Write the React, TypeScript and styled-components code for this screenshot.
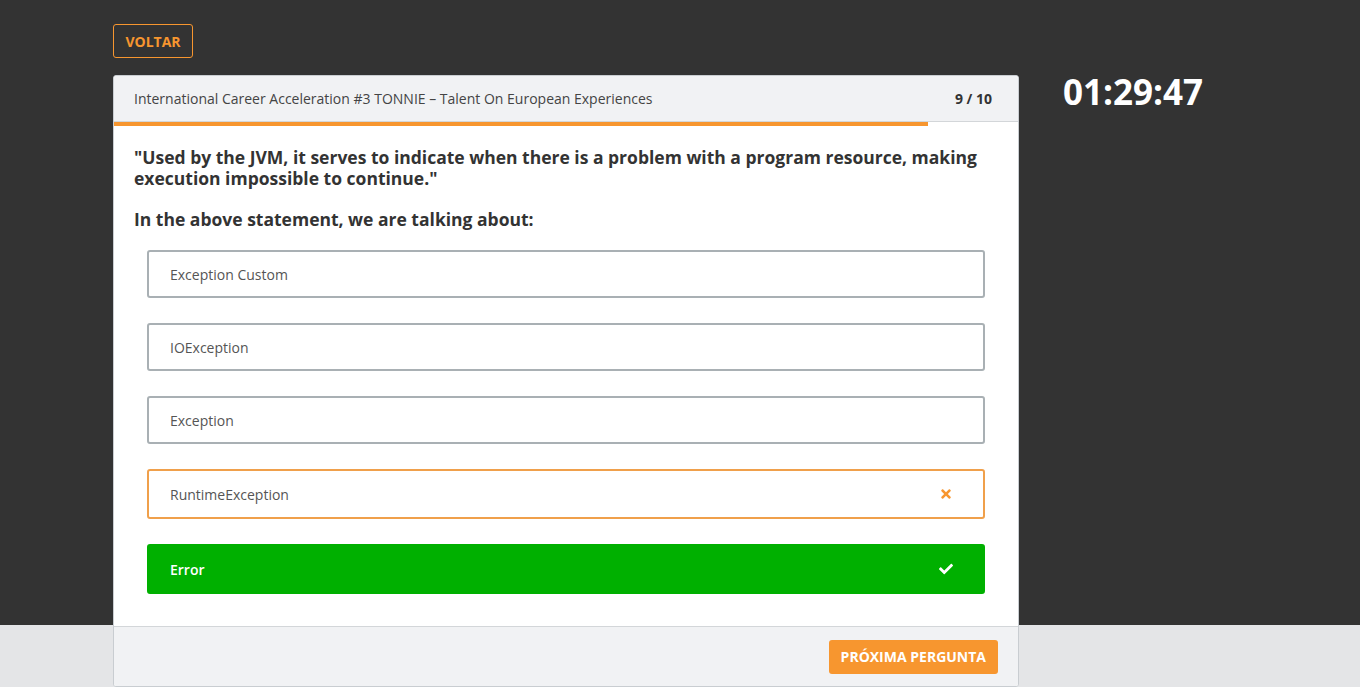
import React from "react";
import styled, { createGlobalStyle } from "styled-components";
import { FaTimes, FaCheck } from "react-icons/fa";

const Global = createGlobalStyle`
  html, body { margin: 0; padding: 0; }
  body {
    font-family: "Open Sans", "Noto Sans", sans-serif;
    background: #e4e5e7;
    -webkit-font-smoothing: antialiased;
  }
`;

const Page = styled.div`
  min-height: 687px;
  background: linear-gradient(#333333 0, #333333 625px, #e4e5e7 625px);
  padding: 24px 0 0 113px;
  box-sizing: border-box;
`;

const BackButton = styled.button`
  display: block;
  width: 80px;
  height: 34px;
  border: 1px solid #f7962f;
  border-radius: 3px;
  background: transparent;
  color: #f7962f;
  font-family: inherit;
  font-size: 14px;
  font-weight: 700;
  padding: 0;
  cursor: pointer;
`;

const Row = styled.div`
  display: flex;
  align-items: flex-start;
  margin-top: 17px;
`;

const Card = styled.div`
  width: 906px;
  box-sizing: border-box;
  background: #fff;
  border: 1px solid #c9cdd1;
  border-radius: 3px;
  overflow: hidden;
`;

const Header = styled.div`
  height: 45px;
  display: flex;
  align-items: center;
  justify-content: space-between;
  padding: 0 26px 0 20px;
  background: #f1f2f4;
  border-bottom: 1px solid #d3d6d9;
`;

const Title = styled.span`
  font-size: 14px;
  color: #444;
`;

const Counter = styled.span`
  font-size: 14px;
  font-weight: 700;
  color: #333;
`;

const Progress = styled.div`
  height: 4px;
  background: #fff;
`;

const ProgressFill = styled.div`
  height: 100%;
  background: #f7962f;
`;

const Body = styled.div`
  padding: 21px 20px 32px 20px;
`;

const Question = styled.p`
  margin: 0 0 20px;
  font-size: 17.5px;
  line-height: 21px;
  font-weight: 700;
  color: #333;
`;

const Options = styled.div`
  display: flex;
  flex-direction: column;
  gap: 25px;
  margin: 0 13px;
`;

type Variant = "default" | "wrong" | "right";

const Option = styled.div<{ $variant: Variant }>`
  height: ${(p) => (p.$variant === "default" ? 48 : 50)}px;
  box-sizing: border-box;
  display: flex;
  align-items: center;
  justify-content: space-between;
  padding: 0 30px 0 21px;
  border-radius: 3px;
  font-size: 14px;
  border: 2px solid
    ${(p) =>
      p.$variant === "wrong" ? "#f0a04b" : p.$variant === "right" ? "#00b000" : "#a9b0b4"};
  background: ${(p) => (p.$variant === "right" ? "#00b000" : "#fff")};
  color: ${(p) => (p.$variant === "right" ? "#fff" : "#555")};
  font-weight: ${(p) => (p.$variant === "right" ? 600 : 400)};
`;

const Icon = styled.span<{ $color: string }>`
  display: flex;
  color: ${(p) => p.$color};
  font-size: 14px;
`;

const Footer = styled.div`
  height: 59px;
  display: flex;
  align-items: center;
  justify-content: flex-end;
  padding: 0 20px;
  background: #f1f2f4;
  border-top: 1px solid #d3d6d9;
`;

const NextButton = styled.button`
  height: 34px;
  padding: 0 12px;
  border: none;
  border-radius: 3px;
  background: #f7962f;
  color: #fff;
  font-family: inherit;
  font-size: 14px;
  font-weight: 700;
  cursor: pointer;
`;

const Timer = styled.div`
  margin-left: 44px;
  margin-top: -3px;
  font-size: 35px;
  font-weight: 700;
  color: #fff;
  line-height: 40px;
`;

const options: { text: string; variant: Variant }[] = [
  { text: "Exception Custom", variant: "default" },
  { text: "IOException", variant: "default" },
  { text: "Exception", variant: "default" },
  { text: "RuntimeException", variant: "wrong" },
  { text: "Error", variant: "right" },
];

export default function App() {
  return (
    <>
      <Global />
      <Page>
        <BackButton>VOLTAR</BackButton>
        <Row>
          <Card>
            <Header>
              <Title>International Career Acceleration #3 TONNIE – Talent On European Experiences</Title>
              <Counter>9 / 10</Counter>
            </Header>
            <Progress>
              <ProgressFill style={{ width: `${(9 / 10) * 100}%` }} />
            </Progress>
            <Body>
              <Question>
                "Used by the JVM, it serves to indicate when there is a problem with a program resource, making
                execution impossible to continue."
              </Question>
              <Question>In the above statement, we are talking about:</Question>
              <Options>
                {options.map((o) => (
                  <Option key={o.text} $variant={o.variant}>
                    <span>{o.text}</span>
                    {o.variant === "wrong" && (
                      <Icon $color="#f7962f">
                        <FaTimes />
                      </Icon>
                    )}
                    {o.variant === "right" && (
                      <Icon $color="#fff">
                        <FaCheck />
                      </Icon>
                    )}
                  </Option>
                ))}
              </Options>
            </Body>
            <Footer>
              <NextButton>PRÓXIMA PERGUNTA</NextButton>
            </Footer>
          </Card>
          <Timer>01:29:47</Timer>
        </Row>
      </Page>
    </>
  );
}
